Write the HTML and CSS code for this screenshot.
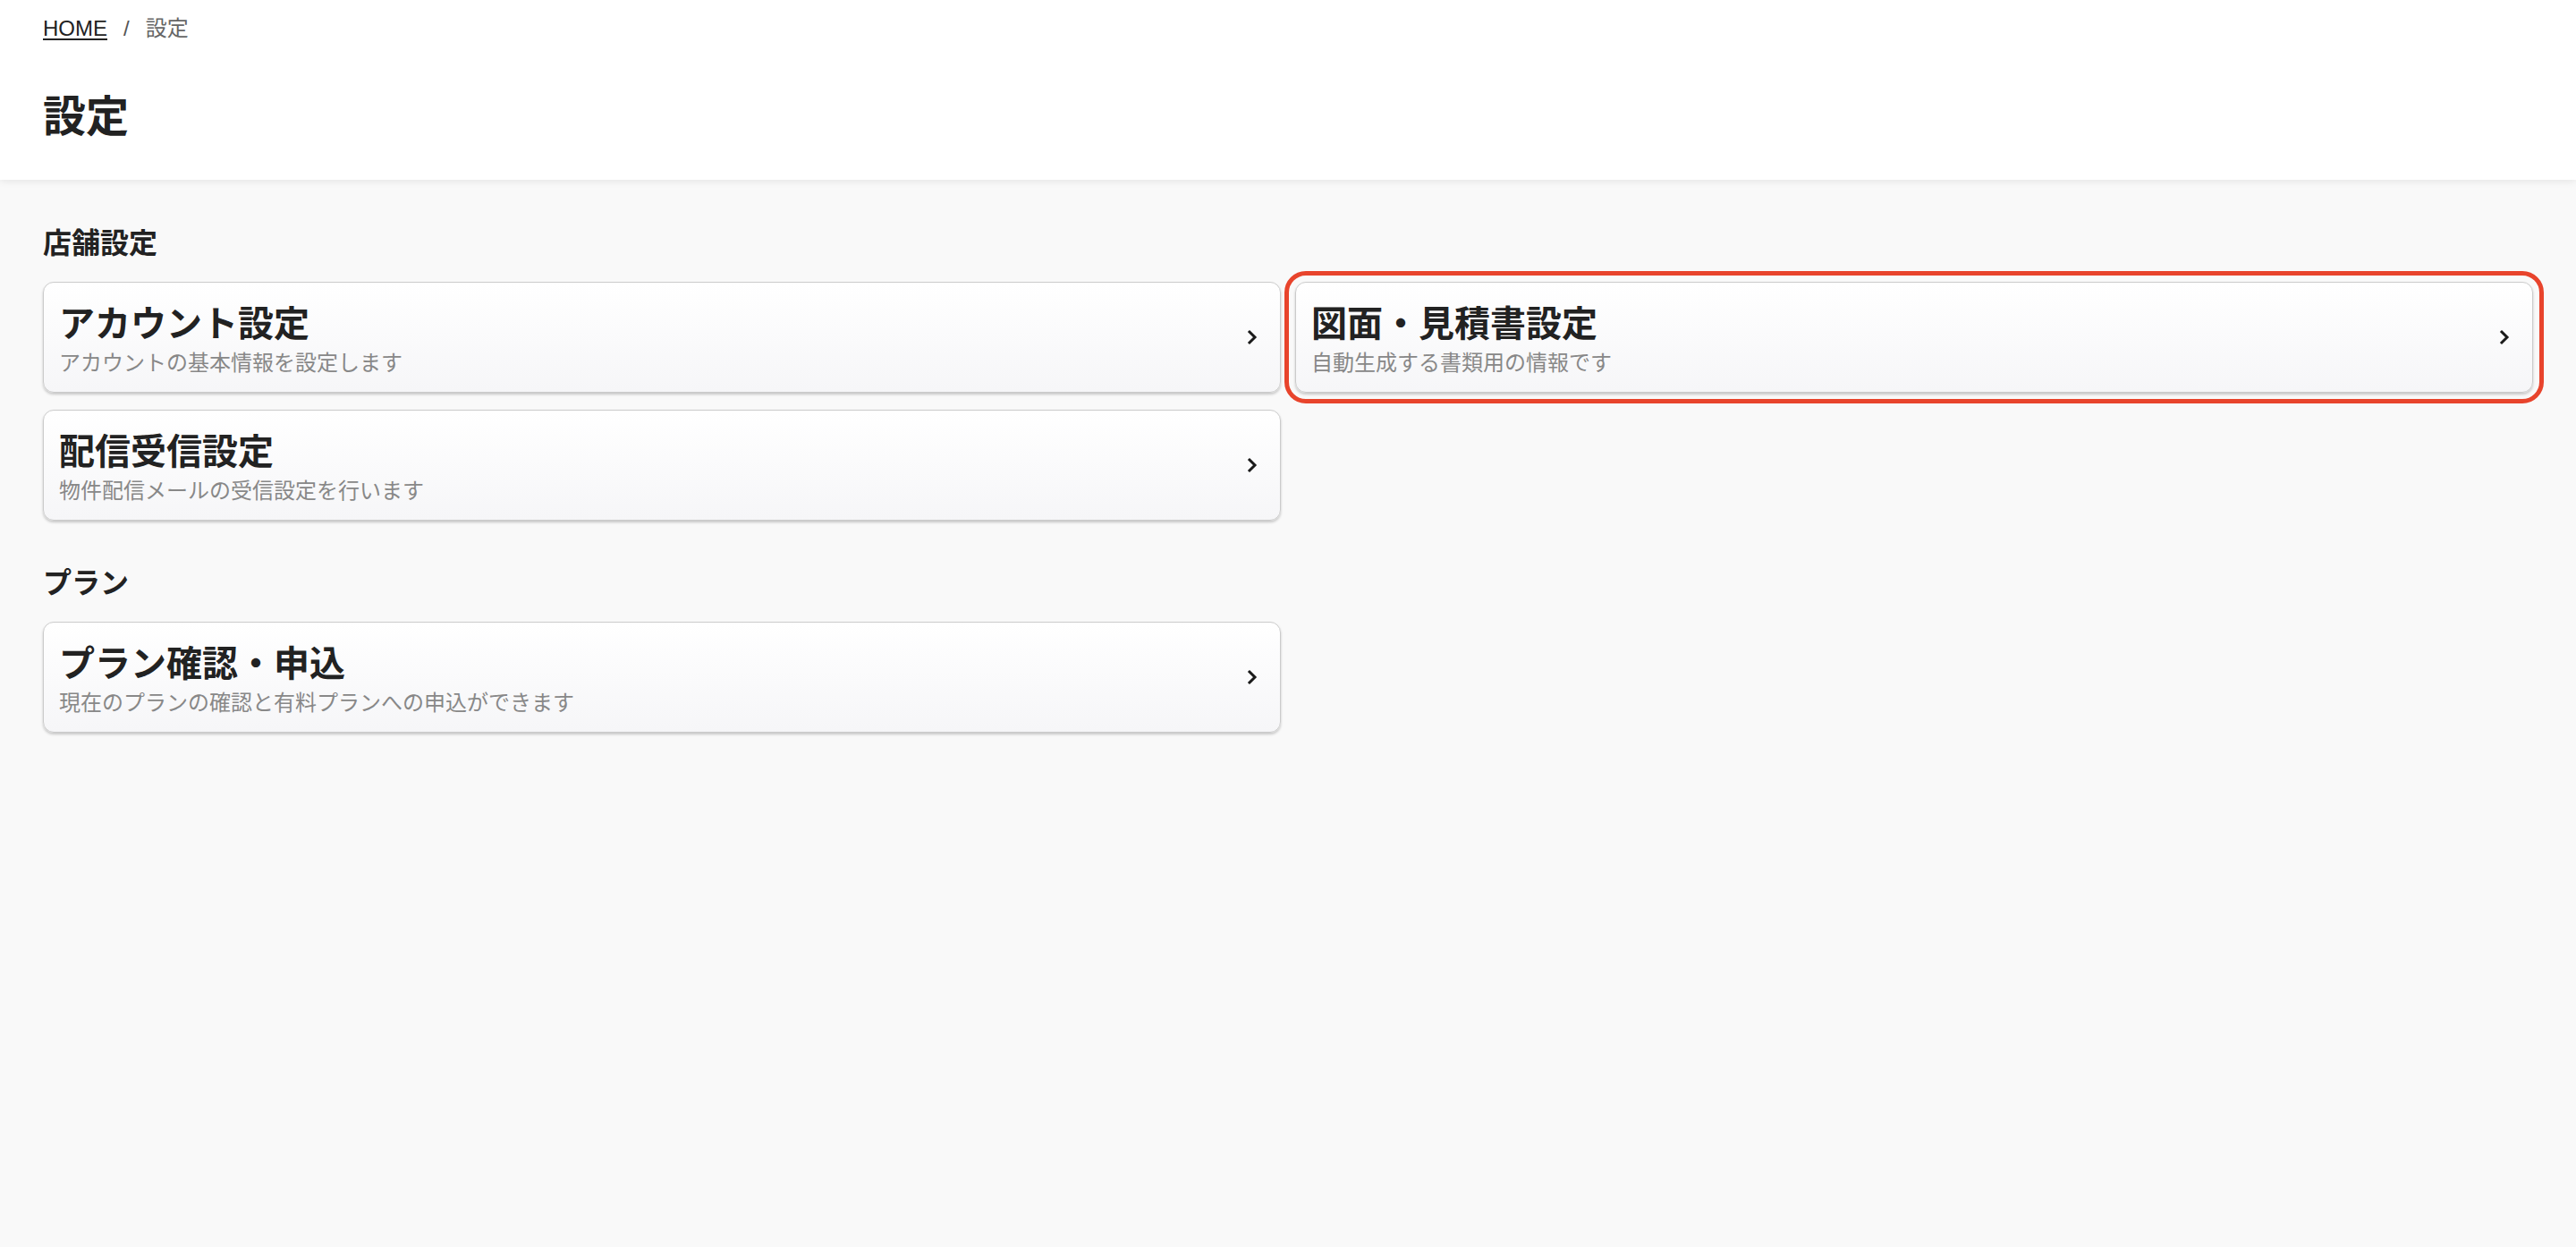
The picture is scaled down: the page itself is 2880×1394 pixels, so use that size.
FILE: index.html
```html
<!DOCTYPE html>
<html lang="ja">
<head>
    <meta charset="UTF-8">
    <meta name="viewport" content="width=device-width, initial-scale=1.0">
    <title>設定</title>
    <link rel="stylesheet" href="styles.css">
</head>
<body>
    <!-- ヘッダー -->
    <header class="page-header">
        <nav class="breadcrumb">
            <a href="#" class="breadcrumb-link">HOME</a>
            <span class="breadcrumb-sep">/</span>
            <span class="breadcrumb-current">設定</span>
        </nav>
        <h1 class="page-title">設定</h1>
    </header>

    <main class="content">
        <!-- 店舗設定 -->
        <section class="settings-section">
            <h2 class="section-title">店舗設定</h2>
            <div class="card-grid">
                <a href="#" class="setting-card">
                    <div class="card-text">
                        <div class="card-title">アカウント設定</div>
                        <div class="card-desc">アカウントの基本情報を設定します</div>
                    </div>
                    <svg class="chevron" width="12" height="18" viewBox="0 0 12 18"><polyline points="3,3 9,9 3,15" /></svg>
                </a>
                <a href="#" class="setting-card is-selected">
                    <div class="card-text">
                        <div class="card-title">図面・見積書設定</div>
                        <div class="card-desc">自動生成する書類用の情報です</div>
                    </div>
                    <svg class="chevron" width="12" height="18" viewBox="0 0 12 18"><polyline points="3,3 9,9 3,15" /></svg>
                </a>
                <a href="#" class="setting-card">
                    <div class="card-text">
                        <div class="card-title">配信受信設定</div>
                        <div class="card-desc">物件配信メールの受信設定を行います</div>
                    </div>
                    <svg class="chevron" width="12" height="18" viewBox="0 0 12 18"><polyline points="3,3 9,9 3,15" /></svg>
                </a>
            </div>
        </section>

        <!-- プラン -->
        <section class="settings-section">
            <h2 class="section-title">プラン</h2>
            <div class="card-grid">
                <a href="#" class="setting-card">
                    <div class="card-text">
                        <div class="card-title">プラン確認・申込</div>
                        <div class="card-desc">現在のプランの確認と有料プランへの申込ができます</div>
                    </div>
                    <svg class="chevron" width="12" height="18" viewBox="0 0 12 18"><polyline points="3,3 9,9 3,15" /></svg>
                </a>
            </div>
        </section>
    </main>
</body>
</html>
```

FILE: styles.css
```css
body {
    font-family: "Liberation Sans", "Noto Sans CJK JP", sans-serif;
    background-color: #f9f9f9;
    color: #222;
    margin: 0;
}

/* ヘッダー */
.page-header {
    background-color: #fff;
    padding: 14px 48px 34px;
    box-shadow: 0 2px 8px rgba(0, 0, 0, 0.08);
    position: relative;
}

.breadcrumb {
    font-size: 24px;
    line-height: 36px;
    display: flex;
    align-items: center;
}

.breadcrumb-link {
    color: #222;
    text-decoration: underline;
    text-underline-offset: 3px;
}

.breadcrumb-sep {
    color: #555;
    margin: 0 18px;
}

.breadcrumb-current {
    color: #666;
}

.page-title {
    font-size: 48px;
    line-height: 72px;
    font-weight: 700;
    margin: 45px 0 0;
}

/* コンテンツ */
.content {
    padding: 47px 48px;
}

.settings-section + .settings-section {
    margin-top: 46px;
}

.section-title {
    font-size: 32px;
    line-height: 48px;
    font-weight: 700;
    margin: 0 0 19px;
}

.card-grid {
    display: grid;
    grid-template-columns: 1fr 1fr;
    column-gap: 16px;
    row-gap: 19px;
}

.setting-card {
    display: flex;
    align-items: center;
    justify-content: space-between;
    padding: 20px 25px 14px 17px;
    background: linear-gradient(#ffffff, #f6f6f8);
    border: 1px solid #cbcbcb;
    border-radius: 12px;
    box-shadow: 0 2px 3px rgba(0, 0, 0, 0.2);
    text-decoration: none;
    color: #222;
}

.setting-card.is-selected {
    outline: 5px solid #e8442c;
    outline-offset: 7px;
}

.card-title {
    font-size: 40px;
    line-height: 52px;
    font-weight: 700;
    color: #222;
}

.card-desc {
    font-size: 24px;
    line-height: 36px;
    color: #888;
}

.chevron {
    flex-shrink: 0;
    margin-bottom: 6px;
    fill: none;
    stroke: #1a1a1a;
    stroke-width: 3;
    stroke-linecap: square;
}
```
